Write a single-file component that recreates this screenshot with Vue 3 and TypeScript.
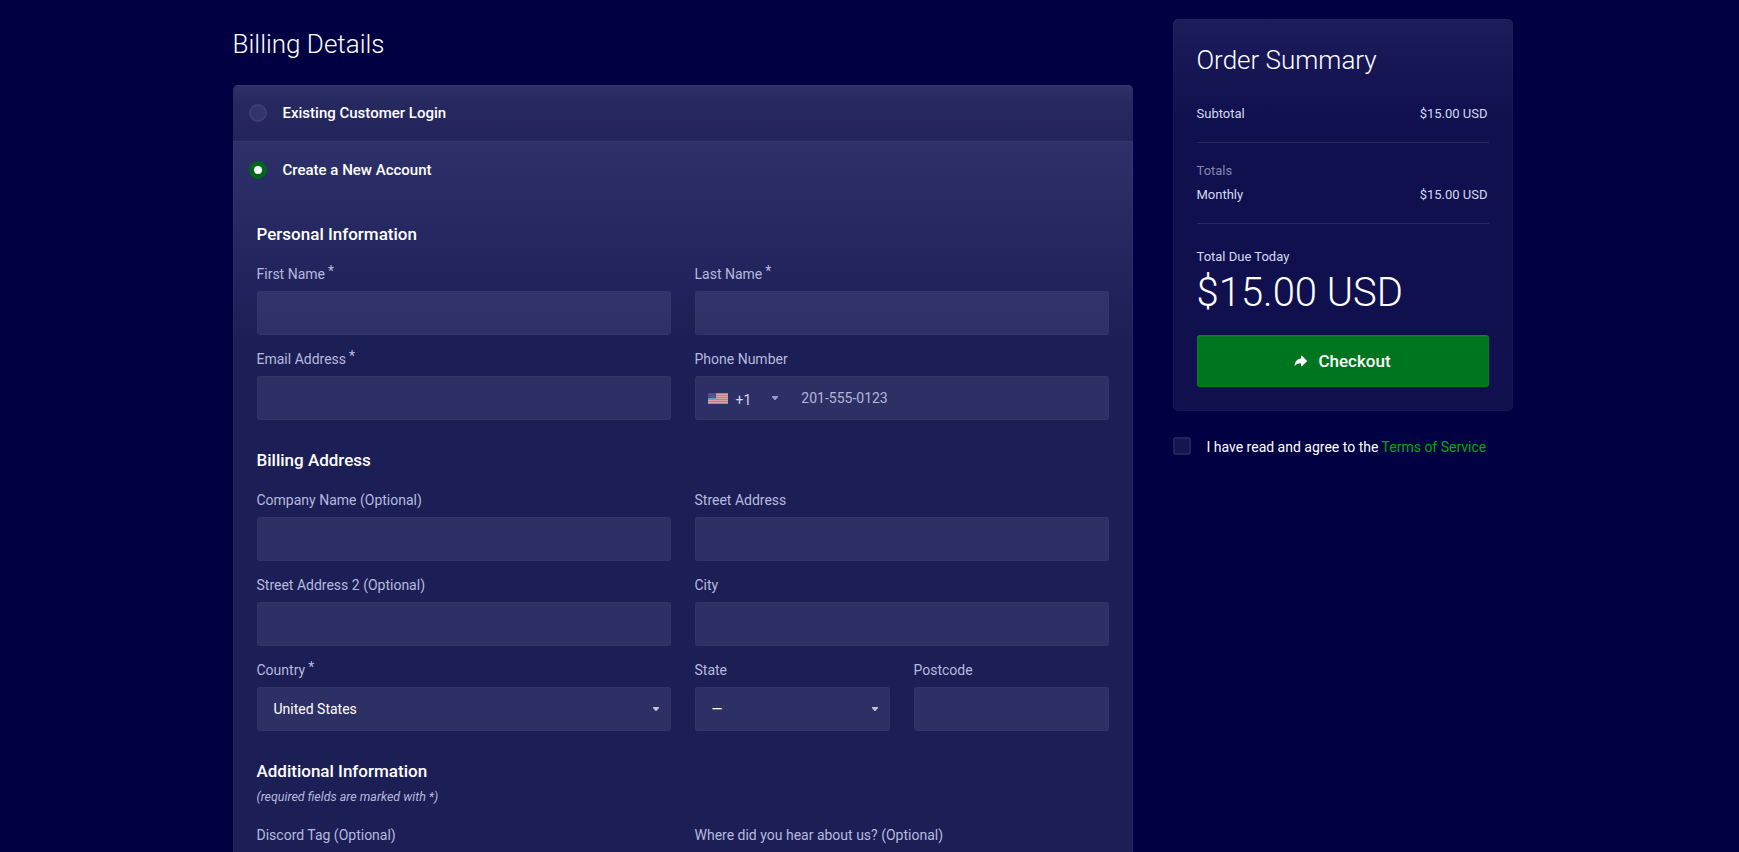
<script setup lang="ts">
import { ref } from 'vue'

interface Field {
  id: string
  label: string
  required?: boolean
  kind?: 'text' | 'phone' | 'select'
  value?: string
  half?: boolean
}

interface Section {
  title: string
  note?: string
  fields: Field[]
}

const accountMode = ref<'existing' | 'new'>('new')
const agreed = ref(false)

const sections: Section[] = [
  {
    title: 'Personal Information',
    fields: [
      { id: 'first', label: 'First Name', required: true },
      { id: 'last', label: 'Last Name', required: true },
      { id: 'email', label: 'Email Address', required: true },
      { id: 'phone', label: 'Phone Number', kind: 'phone' },
    ],
  },
  {
    title: 'Billing Address',
    fields: [
      { id: 'company', label: 'Company Name (Optional)' },
      { id: 'street', label: 'Street Address' },
      { id: 'street2', label: 'Street Address 2 (Optional)' },
      { id: 'city', label: 'City' },
      { id: 'country', label: 'Country', required: true, kind: 'select', value: 'United States' },
      { id: 'state', label: 'State', kind: 'select', value: '—', half: true },
      { id: 'postcode', label: 'Postcode', half: true },
    ],
  },
  {
    title: 'Additional Information',
    note: '(required fields are marked with *)',
    fields: [
      { id: 'discord', label: 'Discord Tag (Optional)' },
      { id: 'hear', label: 'Where did you hear about us? (Optional)' },
    ],
  },
]
</script>

<template>
  <div class="page">
    <main class="main">
      <h1 class="page-title">Billing Details</h1>
      <div class="card">
        <div class="option collapsed" @click="accountMode = 'existing'">
          <span class="radio" :class="{ on: accountMode === 'existing' }"></span>
          <span class="option-label">Existing Customer Login</span>
        </div>
        <div class="expanded">
          <div class="option" @click="accountMode = 'new'">
            <span class="radio" :class="{ on: accountMode === 'new' }"></span>
            <span class="option-label">Create a New Account</span>
          </div>
          <div class="sections">
            <section v-for="s in sections" :key="s.title" class="section">
              <h2 class="section-title">{{ s.title }}</h2>
              <p v-if="s.note" class="note">{{ s.note }}</p>
              <div class="grid" :class="{ noted: s.note }">
                <div v-for="f in s.fields" :key="f.id" class="field" :class="{ half: f.half }">
                  <label class="label" :for="f.id">{{ f.label }}<span v-if="f.required" class="star">*</span></label>
                  <div v-if="f.kind === 'phone'" class="control phone">
                    <svg class="flag" width="20" height="11" viewBox="0 0 20 11">
                      <rect width="20" height="11" fill="#dfa3b0" />
                      <path d="M0 .5h20M0 2.5h20M0 4.5h20M0 6.500h20M0 8.500h20M0 10.500h20" stroke="#d0737f" stroke-width="1" />
                      <rect width="8" height="5" fill="#4c4c86" />
                      <path d="M0 5.500h8" stroke="#5f9bc8" />
                      <path d="M1 1.500h6M2 3.500h5" stroke="#65659a" stroke-dasharray="1 1" />
                    </svg>
                    <span class="dial">+1</span>
                    <svg class="caret" width="6" height="4" viewBox="0 0 6 4"><path d="M0 0h6v1L3.500 4h-1L0 1z" /></svg>
                    <input :id="f.id" class="phone-input" type="tel" placeholder="201-555-0123" />
                  </div>
                  <div v-else-if="f.kind === 'select'" class="control select">
                    <span>{{ f.value }}</span>
                    <svg class="caret" width="6" height="4" viewBox="0 0 6 4"><path d="M0 0h6v1L3.500 4h-1L0 1z" /></svg>
                  </div>
                  <input v-else :id="f.id" class="control" type="text" />
                </div>
              </div>
            </section>
          </div>
        </div>
      </div>
    </main>

    <aside class="side">
      <div class="summary">
        <h2 class="summary-title">Order Summary</h2>
        <div class="row"><span>Subtotal</span><span>$15.00 USD</span></div>
        <div class="totals">
          <div class="muted">Totals</div>
          <div class="row"><span>Monthly</span><span>$15.00 USD</span></div>
        </div>
        <div class="due">
          <div class="due-label">Total Due Today</div>
          <div class="price">$15.00 USD</div>
        </div>
        <button class="checkout" type="button">
          <svg width="14" height="12" viewBox="0 0 14 12">
            <path d="M7 .7h1L13.200 6 8 11.300H7V8.300C4.600 8.200 2.600 8.800.7 11 .6 7.100 3 3.900 7 3.600z" fill="#fff" />
          </svg>
          <span>Checkout</span>
        </button>
      </div>
      <label class="terms">
        <span class="checkbox" :class="{ checked: agreed }" @click="agreed = !agreed"></span>
        <span class="terms-text">I have read and agree to the <a class="link">Terms of Service</a></span>
      </label>
    </aside>
  </div>
</template>

<style>
html,
body {
  margin: 0;
  background: #000042;
}
</style>

<style scoped>
* {
  box-sizing: border-box;
}
h1,
h2,
p {
  margin: 0;
}
.page {
  width: 1280px;
  height: 852px;
  margin-left: calc(50% - 637px);
  display: flex;
  align-items: flex-start;
  gap: 40px;
  overflow: hidden;
  font-family: Roboto, 'Liberation Sans', sans-serif;
  font-size: 14px;
  color: #fff;
}
.main {
  width: 900px;
  padding-top: 24px;
}
.page-title,
.summary-title {
  font-size: 26px;
  font-weight: 300;
  line-height: 40px;
}
.card {
  margin-top: 21px;
  border-radius: 5px 5px 0 0;
  background: #1c1e56;
  box-shadow: inset 0 0 0 1px rgba(145, 155, 215, 0.08);
  overflow: hidden;
}
.option {
  height: 56px;
  padding: 0 16px;
  display: flex;
  align-items: center;
  gap: 16px;
}
.collapsed {
  height: 57px;
  border-bottom: 1px solid #30386f;
  background: linear-gradient(#34376d 1px, #2e3067 1px, #262860 17px, #22245b);
}
.option-label {
  font-size: 15px;
  font-weight: 500;
}
.radio {
  width: 18px;
  height: 18px;
  border-radius: 50%;
  border: 2px solid #3c3f74;
  background: #32356b;
}
.radio.on {
  border: 5px solid #00661b;
  background: #fff;
}
.expanded {
  background: linear-gradient(rgba(145, 150, 215, 0.15), rgba(145, 150, 215, 0) 200px);
}
.sections {
  padding: 24px;
  display: flex;
  flex-direction: column;
  gap: 15px;
}
.section {
  margin-bottom: -1px;
}
.section-title {
  font-size: 17px;
  font-weight: 500;
  line-height: 24px;
}
.note {
  margin-top: 5px;
  font-size: 12.45px;
  font-style: italic;
  line-height: 18px;
  color: #b5bade;
}
.grid {
  margin-top: 18px;
  display: grid;
  grid-template-columns: repeat(4, 1fr);
  column-gap: 24px;
}
.grid.noted {
  margin-top: 19px;
}
.field {
  grid-column: span 2;
  display: flex;
  flex-direction: column;
  padding-bottom: 14px;
}
.field.half {
  grid-column: span 1;
}
.label {
  height: 20px;
  margin-bottom: 7px;
  line-height: 20px;
  color: #b5bade;
}
.star {
  position: relative;
  top: -3px;
  margin-left: 3px;
}
.control {
  width: 100%;
  height: 44px;
  border: 1px solid rgba(145, 155, 220, 0.03);
  border-radius: 3px;
  background: rgba(145, 155, 190, 0.15);
  outline: none;
  color: #fff;
}
.select {
  display: flex;
  align-items: center;
  justify-content: space-between;
  padding: 0 11px 0 16px;
}
.caret {
  fill: #c0c2d2;
}
.phone {
  display: flex;
  align-items: center;
  padding-left: 12px;
}
.flag {
  margin-top: 1px;
}
.dial {
  margin: 4px 21px 0 8px;
  color: #d4d7f0;
}
.phone .caret {
  fill: #9a9dbf;
}
.phone-input {
  flex: 1;
  min-width: 0;
  margin-left: 23px;
  padding: 0;
  border: 0;
  outline: 0;
  background: none;
  font: inherit;
  color: #fff;
}
.phone-input::placeholder {
  color: #b2b7d8;
  opacity: 1;
}
.side {
  width: 340px;
  padding-top: 19px;
}
.summary {
  height: 392px;
  padding: 21px 24px 24px;
  border-radius: 5px;
  background: linear-gradient(#1c1c5b, #10104f 100px);
  box-shadow: inset 0 0 0 1px rgba(145, 155, 215, 0.04);
  display: flex;
  flex-direction: column;
}
.row {
  display: flex;
  justify-content: space-between;
  padding-right: 1px;
  font-size: 13px;
  line-height: 24px;
  color: #d6daf0;
}
.summary-title + .row {
  margin-top: 22px;
}
.totals {
  margin-top: 16px;
  padding: 16px 0;
  border-top: 1px solid #27295f;
  border-bottom: 1px solid #27295f;
}
.muted {
  font-size: 13px;
  line-height: 24px;
  color: #8285b0;
}
.due {
  margin-top: 23px;
}
.due-label {
  font-size: 13px;
  line-height: 20px;
  color: #d6daf0;
}
.price {
  margin-top: 2px;
  font-size: 40px;
  font-weight: 300;
  line-height: 48px;
}
.checkout {
  height: 52px;
  margin-top: auto;
  border: 0;
  border-radius: 3px;
  background: #00751f;
  box-shadow: inset 0 2px 0 rgba(255, 255, 255, 0.05), inset 0 0 0 1px rgba(255, 255, 255, 0.03);
  color: #fff;
  font: 500 17px Roboto, 'Liberation Sans', sans-serif;
  display: flex;
  align-items: center;
  justify-content: center;
  gap: 10px;
}
.terms {
  margin-top: 26px;
  display: flex;
  align-items: center;
  gap: 16px;
  line-height: 18px;
}
.terms-text {
  padding-top: 1px;
  margin-bottom: -1px;
}
.checkbox {
  width: 18px;
  height: 18px;
  border: 2px solid #22225c;
  border-radius: 3px;
  background: #141450;
}
.checkbox.checked {
  background: #00751f;
}
.link {
  color: #00a80e;
}
</style>
